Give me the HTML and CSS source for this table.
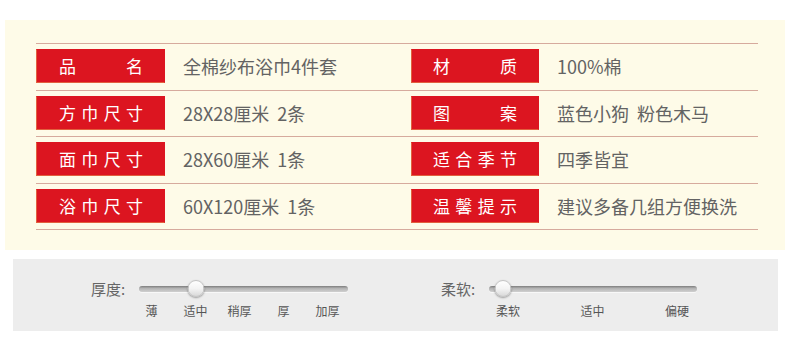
FILE: index.html
```html
<!DOCTYPE html>
<html lang="zh-CN">
<head>
<meta charset="utf-8">
<title>产品参数</title>
<link rel="stylesheet" href="styles.css">
</head>
<body>
<div class="spec">
  <div class="table">
    <div class="row">
      <div class="cell"><div class="tag"><span>品</span><span>名</span></div><div class="val">全棉纱布浴巾4件套</div></div>
      <div class="cell"><div class="tag tag-r"><span>材</span><span>质</span></div><div class="val">100%棉</div></div>
    </div>
    <div class="row">
      <div class="cell"><div class="tag"><span>方</span><span>巾</span><span>尺</span><span>寸</span></div><div class="val">28X28厘米&nbsp;&nbsp;2条</div></div>
      <div class="cell"><div class="tag tag-r"><span>图</span><span>案</span></div><div class="val">蓝色小狗&nbsp;&nbsp;粉色木马</div></div>
    </div>
    <div class="row">
      <div class="cell"><div class="tag"><span>面</span><span>巾</span><span>尺</span><span>寸</span></div><div class="val">28X60厘米&nbsp;&nbsp;1条</div></div>
      <div class="cell"><div class="tag tag-r"><span>适</span><span>合</span><span>季</span><span>节</span></div><div class="val">四季皆宜</div></div>
    </div>
    <div class="row">
      <div class="cell"><div class="tag"><span>浴</span><span>巾</span><span>尺</span><span>寸</span></div><div class="val">60X120厘米&nbsp;&nbsp;1条</div></div>
      <div class="cell"><div class="tag tag-r"><span>温</span><span>馨</span><span>提</span><span>示</span></div><div class="val">建议多备几组方便换洗</div></div>
    </div>
  </div>
</div>

<div class="prefs">
  <div class="group">
    <div class="glabel">厚度:</div>
    <div class="scol">
      <div class="track-wrap w209">
        <div class="track"></div>
        <div class="knob" style="left:57px"></div>
      </div>
      <div class="ticks even">
        <span>薄</span><span>适中</span><span>稍厚</span><span>厚</span><span>加厚</span>
      </div>
    </div>
  </div>
  <div class="group">
    <div class="glabel">柔软:</div>
    <div class="scol">
      <div class="track-wrap w208">
        <div class="track"></div>
        <div class="knob" style="left:14px"></div>
      </div>
      <div class="ticks spread">
        <span>柔软</span><span>适中</span><span>偏硬</span>
      </div>
    </div>
  </div>
</div>
</body>
</html>
```

FILE: styles.css
```css
* { box-sizing: border-box; }

body {
  margin: 0;
  background: #ffffff;
  font-family: "Noto Sans CJK SC", "Noto Sans", sans-serif;
}

.spec {
  margin: 20px 5px 0 5px;
  height: 230px;
  background: #fefbe8;
  padding: 23px 27px 0 31px;
}

.table {
  border-bottom: 1px solid #d6aa9d;
}

.row {
  display: grid;
  grid-template-columns: 375px 1fr;
  border-top: 1px solid #d6aa9d;
  padding: 5px 0 6.5px 0;
}

.cell {
  display: flex;
  align-items: center;
}

.tag {
  width: 129px;
  height: 34px;
  background: #dc1520;
  border: 1px solid #e2603e;
  border-right-color: #dc1520;
  border-top-color: #dc1520;
  display: flex;
  justify-content: space-between;
  align-items: center;
  padding: 0 21px 0 22px;
  color: #ffffff;
  font-size: 17px;
  line-height: 20px;
}

.tag-r {
  width: 128px;
  padding: 0 21px 0 21px;
}

.val {
  margin-left: 18px;
  font-family: "Noto Sans CJK SC", "Noto Sans", sans-serif;
  font-size: 18px;
  line-height: 22px;
  color: #636363;
  white-space: nowrap;
}

.prefs {
  margin: 9px 12px 0 13px;
  height: 72px;
  background: #ededed;
  display: flex;
  padding: 22px 0 0 78px;
}

.group {
  flex: 0 0 350px;
  display: flex;
  align-items: flex-start;
}

.glabel {
  flex: 0 0 48px;
  font-size: 15px;
  line-height: 16px;
  color: #666666;
}

.scol {
  flex: 0 0 auto;
}

.track-wrap {
  position: relative;
  height: 16px;
  display: flex;
  align-items: center;
}

.w209 { width: 209px; }
.w208 { width: 208px; }

.track {
  width: 100%;
  height: 6px;
  border-radius: 3px;
  background: linear-gradient(#7d7d7d, #b4b4b4 40%, #d0d0d0);
  box-shadow: 0 1px 0 #f8f8f8;
}

.knob {
  position: absolute;
  top: -1px;
  width: 17px;
  height: 17px;
  border-radius: 50%;
  transform: translateX(-50%);
  background: linear-gradient(#ffffff, #f4f4f4 50%, #d9d9d9);
  border: 1px solid #c4c4c4;
  box-shadow: 0 1px 2px rgba(0, 0, 0, 0.35);
}

.ticks {
  display: flex;
  margin-top: 6px;
  font-size: 12px;
  line-height: 16px;
  color: #555555;
  white-space: nowrap;
}

.ticks.even {
  margin-left: -9.5px;
}

.ticks.even span {
  width: 44px;
  text-align: center;
}

.ticks.spread {
  margin-left: 7px;
  width: 193px;
  justify-content: space-between;
}
```
